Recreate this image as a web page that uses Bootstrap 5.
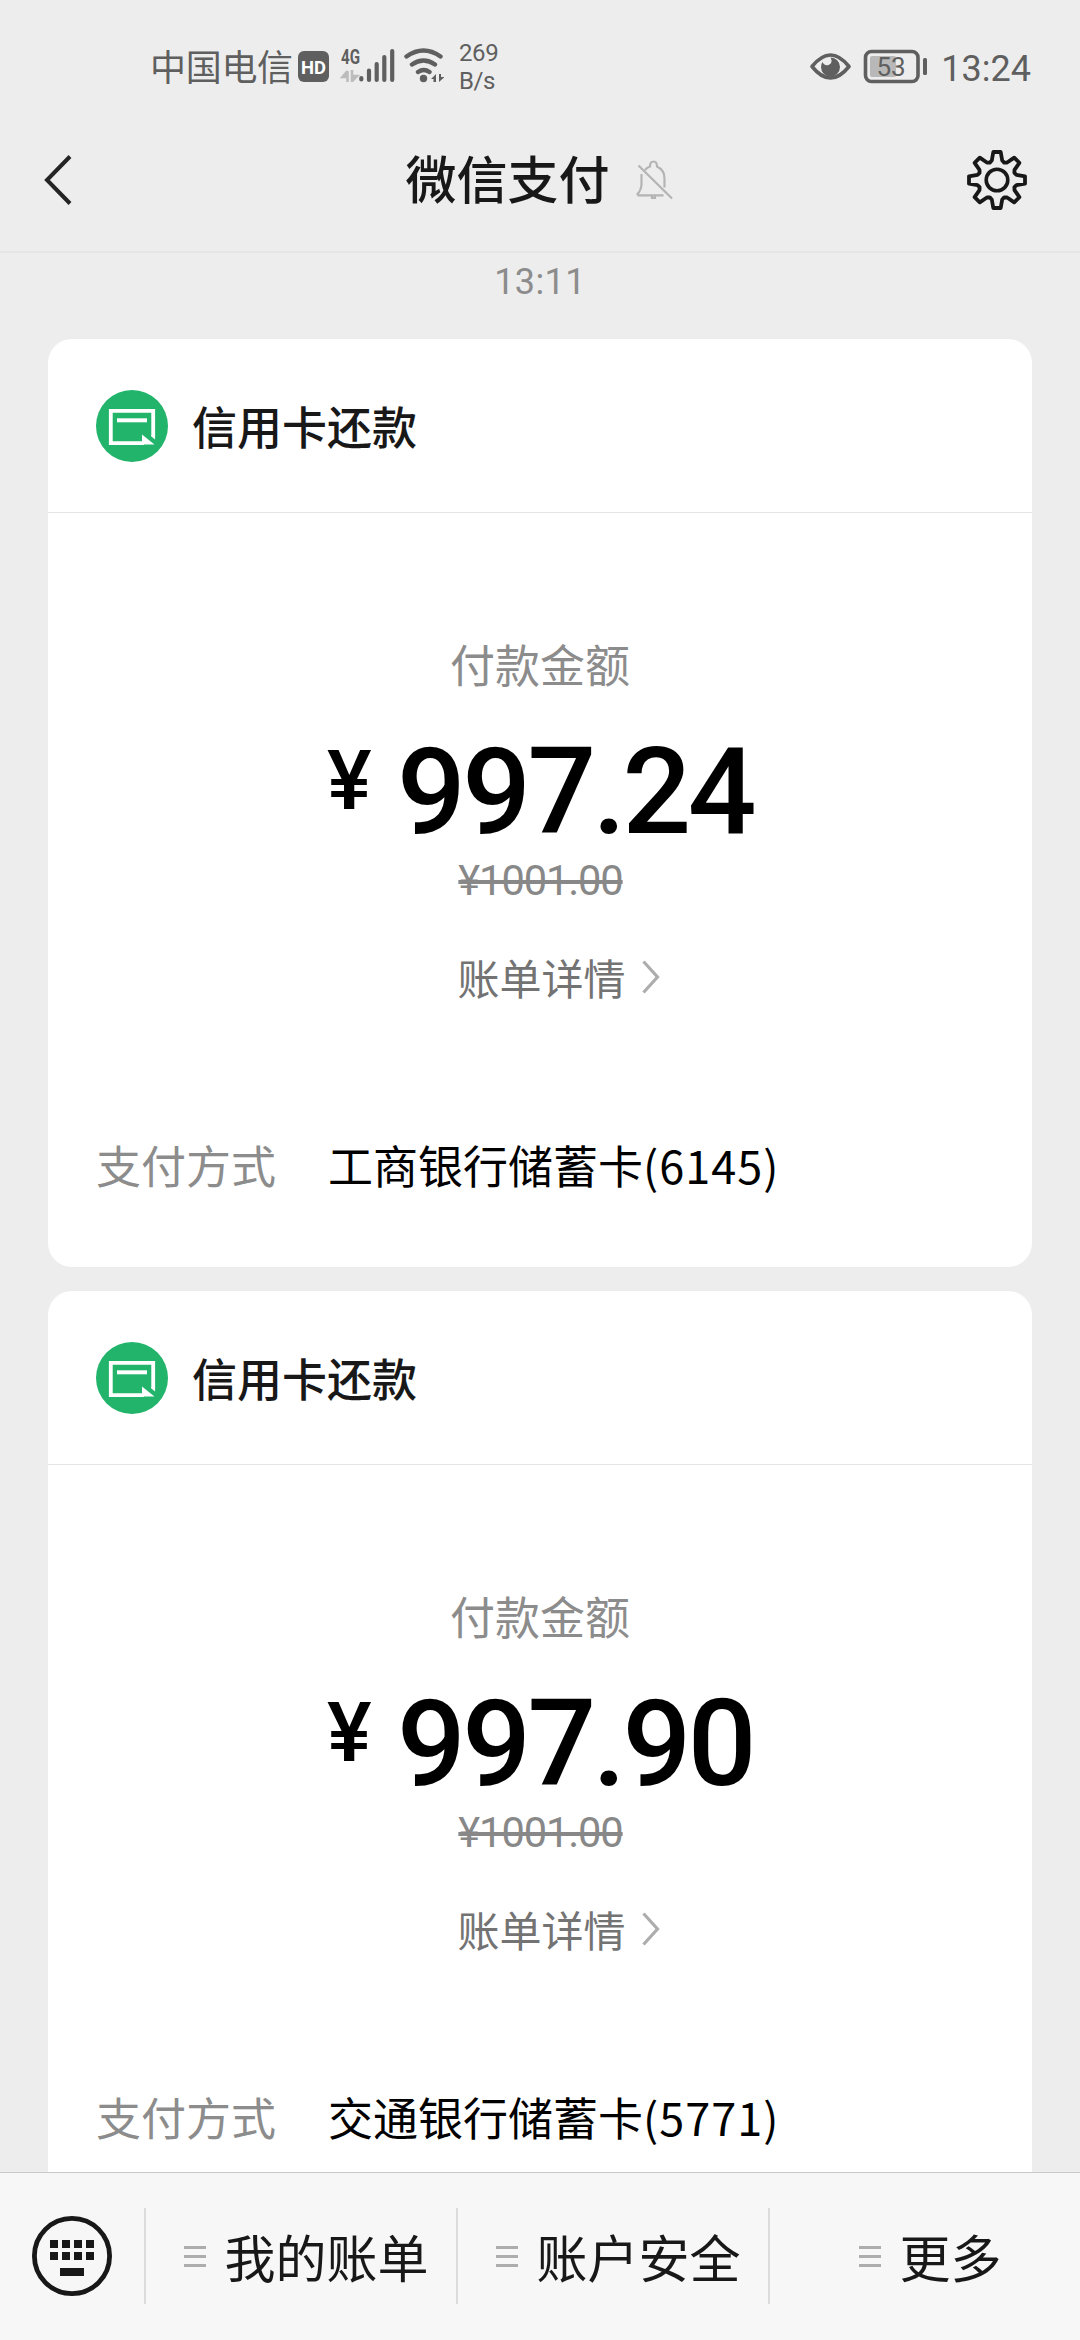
<!DOCTYPE html>
<html lang="zh-CN">
<head>
<meta charset="utf-8">
<meta name="viewport" content="width=device-width, initial-scale=1">
<title>微信支付</title>
<link href="https://cdn.jsdelivr.net/npm/bootstrap@5.3.0/dist/css/bootstrap.min.css" rel="stylesheet">
<style>
body{font-family:"Noto Sans CJK SC",sans-serif;background:#ededed;color:#181818}
svg{display:block;flex:none}
.rb{font-family:Roboto,"Noto Sans CJK SC",sans-serif}
.phone{width:1080px;height:2340px}
.status{height:108px;padding:13px 49px 0 150px;color:#5f5f5f}
.carrier{font-size:36px;line-height:44px;letter-spacing:-.3px;padding-top:30px;width:148px}
.speed{font-size:24px;line-height:28px;padding:26px 0 0 15px;letter-spacing:-.4px}
.clock{font-size:36px;line-height:44px;padding:34px 0 0 12px;letter-spacing:0}
.titlebar{height:145px;padding:0 53px 0 44px;border-bottom:2px solid #e6e6e6}
.titlebar h1{font-size:51px;line-height:60px;font-weight:500;margin-bottom:6px}
.name{padding-left:8px}
.stamp{font-size:36px;line-height:44px;letter-spacing:.4px;color:#8c8c8c;padding-top:7px;height:86px}
.feed{padding:0 48px}
.pay{border-radius:24px;height:928px;margin-bottom:24px;flex:none}
.pay-head{height:174px;border-bottom:1px solid #e5e5e5;padding:0 48px}
.pay-head h2{font-size:45px;line-height:60px;font-weight:500;margin-left:24px}
.cap45{font-size:45px;line-height:60px}
.muted{color:#8c8c8c}
.pay-body{padding:121px 48px 0}
.sum{margin-top:38px;height:120px;color:#000;font-weight:500;font-size:121px;line-height:120px;letter-spacing:-3.6px}
.yen{font-size:84px;line-height:97px;width:70px}
.was{font-size:41.6px;line-height:50px;margin-top:4px;color:#888;text-decoration-thickness:2px;letter-spacing:-1.1px;padding-left:1px}
.detail{font-size:42px;line-height:60px;margin-top:41px;color:#737373;padding-left:37px}
.tail{letter-spacing:1px}
.method{margin-top:128px}
.method dd{color:#000;margin-left:52px}
.tabs{height:168px;background:#f7f7f7;border-top:1px solid #c8c8c8;padding-top:35px}
.tab{width:312px;height:96px;border-left:2px solid #dcdcdc;padding-left:11px;font-size:51px;line-height:60px}
.tab svg{margin:2px 18px 0 0}
.kb{width:144px;height:96px}
</style>
</head>
<body>
<svg width="0" height="0" class="position-absolute">
  <symbol id="bill" viewBox="0 0 72 72"><circle cx="36" cy="36" r="36" fill="#23b46c"/><path d="M57.200 46V20.800H14.800v32.400h33" fill="none" stroke="#fff" stroke-width="3.800"/><path d="M21 30.300h30" stroke="#fff" stroke-width="4"/><path d="M46 44.500 58.500 54.500H46zM55.300 45h3.800v4.500l-3.800-3z" fill="#fff"/></symbol>
  <symbol id="more" viewBox="0 0 18 34"><path d="m1.500 1.500 14 15.500-14 15.500" fill="none" stroke="#adadad" stroke-width="3.200"/></symbol>
  <symbol id="lines" viewBox="0 0 22 22"><path d="M0 1.500h22M0 10.500h22M0 19.500h22" stroke="#adadad" stroke-width="3"/></symbol>
</svg>
<div class="phone d-flex flex-column overflow-hidden">
  <header class="flex-shrink-0">
    <div class="status d-flex align-items-start">
      <span class="carrier text-nowrap">中国电信</span>
      <svg class="rb" width="146" height="50" viewBox="298 43 146 50" style="margin-top:30px">
        <rect x="298" y="51" width="31" height="31" rx="6" fill="#5f5f5f"/>
        <text x="313.500" y="73.500" font-size="19" font-weight="700" fill="#fff" text-anchor="middle" textLength="25" lengthAdjust="spacingAndGlyphs">HD</text>
        <text x="341" y="64" font-size="20" font-weight="700" fill="#5f5f5f" textLength="19" lengthAdjust="spacingAndGlyphs">4G</text>
        <path d="M347.500 71v11M347.500 71l-5 6h5M352 70v12M352 81l5-5h-5" stroke="#bcbcbc" stroke-width="2.600" fill="#bcbcbc"/>
        <path d="M361.300 78v1.500M369 70.500v9.500M376.700 64v16M384.300 57v23M392.200 51v29" stroke="#5f5f5f" stroke-width="4.200" stroke-linecap="round"/>
        <path d="M406.500 56.500q17-12 34 0M412 64.500q11.500-8 23 0M418 72q5.800-4 11.500 0" stroke="#5f5f5f" stroke-width="4.400" fill="none" stroke-linecap="round"/>
        <circle cx="423.500" cy="78.500" r="3.700" fill="#5f5f5f"/>
        <path d="M436 74v8h-2.500v-3H431zM439 74h2v3h3.500L439 82z" fill="#5f5f5f"/>
      </svg>
      <span class="speed rb">269<br>B/s</span>
      <svg class="rb ms-auto" width="120" height="40" viewBox="808 47 120 40" style="margin-top:34px">
        <path d="M811 66.500q18.500-23 37 0-18.500 23-37 0z" fill="none" stroke="#5f5f5f" stroke-width="3.600" stroke-linejoin="round"/>
        <path d="M829.500 57.500a9.500 9.500 0 1 1-9.500 9.500q0-3 1.500-5 2 4 6 3 5-2 2-7.500z" fill="#5f5f5f"/>
        <rect x="864.500" y="51.500" width="52.500" height="30" rx="6" fill="none" stroke="#5f5f5f" stroke-width="3.600"/>
        <rect x="869" y="56" width="26" height="21" rx="2" fill="#b8b8b8"/>
        <text x="890" y="76" font-size="26" fill="#5f5f5f" text-anchor="middle">53</text>
        <rect x="922" y="58" width="4" height="17" rx="1.500" fill="#5f5f5f"/>
      </svg>
      <span class="clock rb">13:24</span>
    </div>
    <div class="titlebar d-flex align-items-center justify-content-between">
      <svg width="80" height="50" viewBox="0 0 80 50"><path d="M26 1.500 3 25l23 23.500" fill="none" stroke="#242424" stroke-width="4"/></svg>
      <div class="name d-flex align-items-center">
        <h1>微信支付</h1>
        <svg class="ms-4" width="40" height="40" viewBox="0 0 40 40"><g fill="none" stroke="#b4b4b4" stroke-width="2.200"><path d="M11 10q2-2.500 5-3.500 0-5 3.500-5t3.500 5q7.500 3.500 7.500 12v9M7.500 14v10.500q-.5 6-4 9.500l1 1.300h25M18 36v2h3v-2"/><path d="m4.500 5.500 33.500 33"/></g></svg>
      </div>
      <svg width="80" height="64" viewBox="-50 -32 80 64"><path id="cog" fill="none" stroke="#181818" stroke-width="3.800" stroke-linejoin="round"/><circle r="10.800" fill="none" stroke="#181818" stroke-width="3.600"/></svg>
    </div>
  </header>
  <main class="feed flex-grow-1 overflow-hidden d-flex flex-column">
    <div class="stamp rb text-center flex-shrink-0">13:11</div>
    <section class="pay bg-white">
      <div class="pay-head d-flex align-items-center"><svg width="72" height="72"><use href="#bill"/></svg><h2 class="mb-0">信用卡还款</h2></div>
      <div class="pay-body">
        <div class="cap45 muted text-center">付款金额</div>
        <div class="sum rb d-flex justify-content-center"><span class="yen">¥</span><span>997.24</span></div>
        <div class="was rb text-center text-decoration-line-through">¥1001.00</div>
        <div class="detail d-flex justify-content-center align-items-center">账单详情<svg class="ms-3" width="18" height="34"><use href="#more"/></svg></div>
        <dl class="method d-flex cap45 mb-0"><dt class="muted fw-normal">支付方式</dt><dd class="mb-0">工商银行储蓄卡<span class="tail">(6145)</span></dd></dl>
      </div>
    </section>
    <section class="pay bg-white">
      <div class="pay-head d-flex align-items-center"><svg width="72" height="72"><use href="#bill"/></svg><h2 class="mb-0">信用卡还款</h2></div>
      <div class="pay-body">
        <div class="cap45 muted text-center">付款金额</div>
        <div class="sum rb d-flex justify-content-center"><span class="yen">¥</span><span>997.90</span></div>
        <div class="was rb text-center text-decoration-line-through">¥1001.00</div>
        <div class="detail d-flex justify-content-center align-items-center">账单详情<svg class="ms-3" width="18" height="34"><use href="#more"/></svg></div>
        <dl class="method d-flex cap45 mb-0"><dt class="muted fw-normal">支付方式</dt><dd class="mb-0">交通银行储蓄卡<span class="tail">(5771)</span></dd></dl>
      </div>
    </section>
  </main>
  <nav class="tabs d-flex flex-shrink-0">
    <div class="kb d-flex align-items-center justify-content-center"><svg width="80" height="80" viewBox="0 0 80 80"><circle cx="40" cy="40" r="37.600" fill="none" stroke="#181818" stroke-width="4.800"/><path d="M18 28h44M18 40h44" stroke="#181818" stroke-width="8" stroke-dasharray="8 4"/><path d="M28 56h24" stroke="#181818" stroke-width="8"/></svg></div>
    <div class="tab d-flex align-items-center justify-content-center"><svg width="22" height="22"><use href="#lines"/></svg>我的账单</div>
    <div class="tab d-flex align-items-center justify-content-center"><svg width="22" height="22"><use href="#lines"/></svg>账户安全</div>
    <div class="tab d-flex align-items-center justify-content-center"><svg width="22" height="22"><use href="#lines"/></svg>更多</div>
  </nav>
</div>
<script src="https://cdn.jsdelivr.net/npm/bootstrap@5.3.0/dist/js/bootstrap.bundle.min.js"></script>
<script>
// Eight-toothed cog outline: tip, shoulder and valley points per tooth
const pts=[];
for(let k=0;k<8;k++){
  const a=k*Math.PI/4;
  for(const [r,d] of [[20.2,-15],[28.2,-7.5],[28.2,7.5],[20.2,15],[18.8,22.5]]){
    const t=a+d*Math.PI/180;
    pts.push((r*Math.sin(t)).toFixed(1)+' '+(-r*Math.cos(t)).toFixed(1));
  }
}
document.getElementById('cog').setAttribute('d','M'+pts.join('L')+'Z');
</script>
</body>
</html>
